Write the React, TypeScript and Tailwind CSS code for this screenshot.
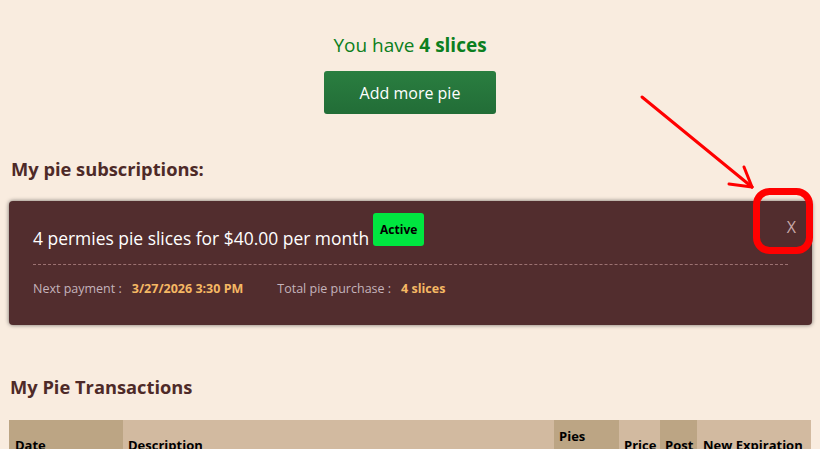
export default function App() {
  return (
    <div className="relative min-h-screen bg-[#f9ecdf] font-['Open_Sans',sans-serif] text-[#4e2a28]">

      {/* balance + buy */}
      <div className="flex flex-col items-center pt-[33px]">
        <p className="text-[19px] leading-6 text-[#0c7f20]">
          You have <span className="font-bold">4 slices</span>
        </p>
        <button className="mt-[14px] h-[43px] w-[172px] rounded-[3px] bg-gradient-to-b from-[#2a7e40] to-[#226d37] text-[16px] text-white">
          Add more pie
        </button>
      </div>

      {/* subscriptions */}
      <h2 className="ml-[11px] mt-[43px] text-[18.3px] font-bold leading-6">
        My pie subscriptions:
      </h2>

      <div className="relative mx-[9px] mt-[20px] w-[803px] rounded-[4px] bg-[#522d2e] px-6 pb-[28px] pt-3 shadow-[0_0_4px_rgba(0,0,0,0.55)]">
        <div className="flex items-start">
          <span className="mt-[13px] text-[17.45px] leading-6 text-white">
            4 permies pie slices for $40.00 per month
          </span>
          <span className="ml-[4px] rounded-[3px] bg-[#00e640] px-[7px] py-[7px] text-[12px] font-bold leading-[19px] text-black">
            Active
          </span>
        </div>
        <button className="absolute right-[16px] top-[14px] text-[16px] leading-6 text-[#c8a8a8]">
          X
        </button>

        <div className="mt-[14px] border-t border-dashed border-[#9c7272]" />

        <div className="mt-[16px] flex text-[12.5px] leading-4">
          <span className="text-[#c4b3bb]">Next payment :</span>
          <span className="ml-[10px] font-bold text-[#f5b864]">3/27/2026 3:30 PM</span>
          <span className="ml-[34px] text-[#c4b3bb]">Total pie purchase :</span>
          <span className="ml-[10px] font-bold text-[#f5b864]">4 slices</span>
        </div>
      </div>

      {/* transactions */}
      <h2 className="ml-[10px] mt-[50px] text-[18.3px] font-bold leading-6">
        My Pie Transactions
      </h2>

      <table className="ml-[9px] mt-[21px] w-[802px] table-fixed border-collapse text-[13px] text-black">
        <thead>
          <tr className="align-middle">
            <th className="w-[114px] bg-[#bca584] px-[6px] py-[7px] text-left font-bold leading-[18px]">Date</th>
            <th className="w-[431px] bg-[#d2baa0] px-[5px] py-[7px] text-left font-bold leading-[18px]">Description</th>
            <th className="w-[65px] bg-[#bca584] px-[5px] py-[7px] text-left font-bold leading-[18px]">Pies Received</th>
            <th className="w-[41px] bg-[#d2baa0] px-[5px] py-[7px] text-left font-bold leading-[18px]">Price</th>
            <th className="w-[37px] bg-[#bca584] px-[5px] py-[7px] text-left font-bold leading-[18px]">Post</th>
            <th className="w-[114px] bg-[#d2baa0] px-[6px] py-[7px] text-left font-bold leading-[18px]">New Expiration</th>
          </tr>
        </thead>
        <tbody>
          <tr>
            <td className="px-[6px] py-[7px]">3/27/2026</td>
            <td className="px-[5px] py-[7px]">Subscription payment</td>
            <td className="px-[5px] py-[7px]">4</td>
            <td className="px-[5px] py-[7px]">$40.00</td>
            <td className="px-[5px] py-[7px]"></td>
            <td className="px-[6px] py-[7px]"></td>
          </tr>
        </tbody>
      </table>

      {/* red annotation */}
      <svg className="pointer-events-none absolute left-0 top-0" width="820" height="449">
        <g stroke="#ff0000" strokeWidth="3" strokeLinecap="round" fill="none">
          <line x1="642" y1="97" x2="752" y2="187" />
          <line x1="752" y1="187" x2="744" y2="167" />
          <line x1="752" y1="187" x2="729" y2="184" />
        </g>
        <rect x="756.5" y="191.5" width="53" height="59" rx="13" fill="none" stroke="#ff0000" strokeWidth="7" />
      </svg>
    </div>
  )
}
